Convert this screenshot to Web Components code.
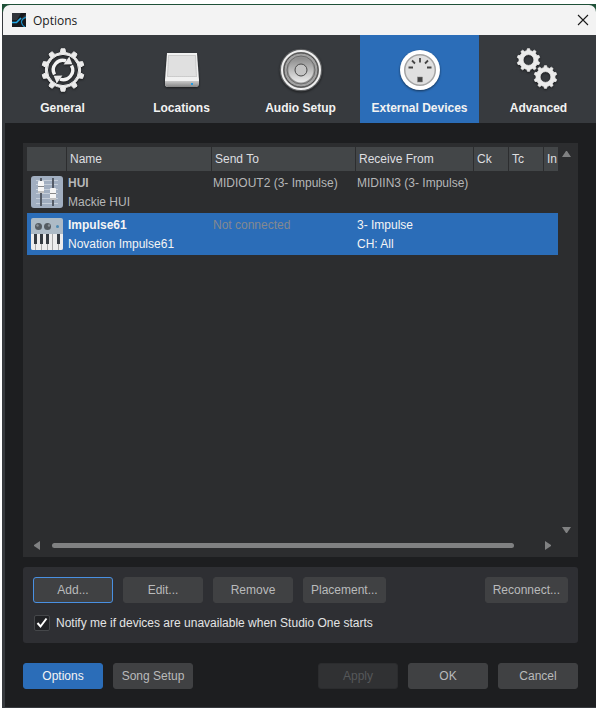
<!DOCTYPE html>
<html lang="en">
<head>
<meta charset="utf-8">
<title>Options</title>
<style>
html,body{margin:0;background:#fff}
body{font-family:"Liberation Sans",Arial,sans-serif;font-size:12px;overflow:hidden}
</style>
</head>
<body>
<options-window></options-window>
<script>
function define(name, html, setup) {
  customElements.define(name, class extends HTMLElement {
    connectedCallback() {
      if (this.shadowRoot) return;
      const t = document.createElement('template');
      t.innerHTML = html;
      this.attachShadow({mode: 'open'}).append(t.content.cloneNode(true));
      if (setup) setup(this, this.shadowRoot);
    }
  });
}

/* Toothed wheel outline centred on 0,0 */
function gearPath(teeth, outer, root, half, tip) {
  let d = '';
  for (let i = 0; i < teeth; i++) {
    const a = i * 2 * Math.PI / teeth - Math.PI / 2;
    [[root, -half], [outer, -tip], [outer, tip], [root, half]].forEach(([r, o], k) => {
      const p = (r * Math.cos(a + o)).toFixed(2) + ' ' + (r * Math.sin(a + o)).toFixed(2);
      d += !d ? 'M' + p : k ? 'L' + p : `A${root} ${root} 0 0 1 ${p}`;
    });
  }
  return d + 'Z';
}
const circle = r => `M${r} 0A${r} ${r} 0 1 0 ${-r} 0A${r} ${r} 0 1 0 ${r} 0Z`;
const cycleArrow = `<path d="M-8.500 4.500A9.600 9.600 0 0 1 3 -9.200" fill="none" stroke="#f4f4f4" stroke-width="3.400"/><path d="M6.300 -13.500L9.300 -5.800L.6 -5.400Z"/>`;

const icons = {
  general: `<svg viewBox="-24 -24 48 48" width="48" height="48" fill="#ebebeb">
    <path fill-rule="evenodd" stroke="#ebebeb" stroke-width="1" stroke-linejoin="round" d="${gearPath(10, 21.3, 17.6, .15, .09)}${circle(15.6)}"/>
    <g>${cycleArrow}</g><g transform="rotate(180)">${cycleArrow}</g></svg>`,
  locations: `<svg viewBox="0 0 48 48" width="48" height="48">
    <defs><linearGradient id="f" x2="0" y2="1"><stop stop-color="#c9c9c9"/><stop offset="1" stop-color="#858585"/></linearGradient></defs>
    <path d="M9 7H39L41 34Q41 41 38 41H10Q7 41 7 38V34Z" fill="#f1f1f1"/>
    <path d="M7 35H41V38Q41 41 38 41H10Q7 41 7 38Z" fill="url(#f)"/>
    <path d="M10.500 9.500H37.500L38.500 30.500H9.500Z" fill="#e0e0e0" stroke="#b0b0b0" stroke-dasharray="1 1"/>
    <rect x="33" y="37" width="2" height="2" fill="#219be4"/></svg>`,
  audio: `<svg viewBox="-24 -24 48 48" width="48" height="48">
    <defs><linearGradient id="s" x2="0" y2="1"><stop stop-color="#8a8a8a"/><stop offset="1" stop-color="#ececec"/></linearGradient></defs>
    <circle r="21.300" fill="#5c5e60"/><circle r="19" fill="#777" stroke="#efefef" stroke-width="2"/>
    <circle r="17" fill="#a2a2a2" stroke="#4a4a4a"/><circle r="14" fill="#959595" stroke="#6b6b6b"/>
    <circle r="12.500" fill="url(#s)"/><circle r="6" fill="#c4c4c4" stroke="#4a4a4a"/></svg>`,
  devices: `<svg viewBox="-24 -24 48 48" width="48" height="48">
    <circle r="20" fill="#fff"/><circle r="15.300" fill="#e0e0e0" stroke="#a4a4a4" stroke-width="1.500"/>
    <path d="M0-12V-7.500M-8-9.500L-5-6.500M8-9.500L5-6.500M-11.500-2.500H-7M11.500-2.500H7" stroke="#444" stroke-width="1.800"/>
    <rect x="-2.500" y="7" width="5" height="5" fill="#444" stroke="#888" stroke-width=".5"/></svg>`,
  advanced: `<svg viewBox="-24 -24 48 48" width="48" height="48" fill="#ebebeb">
    <g fill-rule="evenodd" stroke="#ebebeb" stroke-width=".8" stroke-linejoin="round">
    <path transform="translate(-10.500 -10)" d="${gearPath(10, 11.4, 9.5, .17, .1)}${circle(5.4)}"/>
    <path transform="translate(6.500 7)" d="${gearPath(10, 11.4, 9.5, .17, .1)}${circle(5.4)}"/></g></svg>`,
  mixer: `<svg viewBox="0 0 32 32" width="32" height="32">
    <rect width="32" height="32" rx="3" fill="#a1aec0"/>
    <path d="M5 4.500H27M5 8.500H27M5 13.500H27M5 17.500H27M5 22.500H27M5 27.500H27" stroke="#c5ced9"/>
    <path d="M10 2V30M22 2V30" stroke="#545b66" stroke-width="2"/>
    <rect x="7" y="5" width="6" height="12" rx="1" fill="#f5f5f5"/><path d="M7 10.500H13" stroke="#888"/><path d="M7 16H13" stroke="#c0c0c0" stroke-width="2"/>
    <rect x="19" y="12" width="6" height="12" rx="1" fill="#f5f5f5"/><path d="M19 17.500H25" stroke="#888"/><path d="M19 23H25" stroke="#c0c0c0" stroke-width="2"/></svg>`,
  keyboard: `<svg viewBox="0 0 32 32" width="32" height="32">
    <rect width="32" height="32" rx="2" fill="#adbbc6"/><path d="M0 16H32V30Q32 32 30 32H2Q0 32 0 30Z" fill="#ededed"/>
    <path d="M4.500 26V32M10.500 26V32M16.500 26V32M21.500 16V32M27.500 26V32" stroke="#a9a9a9"/>
    <path d="M3 16h3v10H3ZM9 16h3v10H9ZM15 16h3v10H15ZM26 16h3v10H26Z" fill="#353b41"/>
    <circle cx="7.500" cy="8.500" r="3.500" fill="#555c62"/><circle cx="16.500" cy="8.500" r="3.500" fill="#555c62"/>
    <circle cx="6.500" cy="7.500" r="1.200" fill="#8a9299"/><circle cx="18" cy="7.500" r="1.200" fill="#8a9299"/>
    <circle cx="26.500" cy="8.500" r="1.500" fill="#4f8bb3"/></svg>`,
  app: `<svg viewBox="0 0 14 14" width="14" height="14">
    <rect width="14" height="14" fill="#17191c"/><path d="M0 0H9L5 7H0Z" fill="#30343a"/><path d="M9 6L14 1V6Z" fill="#30343a"/>
    <path d="M0 9.500H4.500L9 5" fill="none" stroke="#22a9e6" stroke-width="1.600"/>
    <path d="M14 4Q9 6.500 9.500 9.500T13 14" fill="none" stroke="#1b8fc6" stroke-width="1.200"/></svg>`
};

define('ui-icon', `<style>:host{display:block;line-height:0}svg{display:block}:host([shadow]) svg{filter:drop-shadow(0 1px 1px #0008)}</style>`,
  (host, root) => root.append(document.createRange().createContextualFragment(icons[host.getAttribute('name')])));

define('title-bar', `<style>
:host{display:flex;align-items:center;height:30px;padding:0 7px 0 9px;background:#f3f3f3;color:#1a1a1a;border-radius:7px 7px 0 0;font-family:"Open Sans","Noto Sans",sans-serif}
h1{font-size:12px;font-weight:400;margin:0 auto 0 7px}
button{border:0;padding:0;background:none;width:12px;height:12px}svg{display:block}
</style><ui-icon name="app"></ui-icon><h1><slot></slot></h1>
<button aria-label="Close"><svg width="12" height="12" viewBox="0 0 12 12"><path d="M1 1L11 11M11 1L1 11" stroke="#1a1a1a" stroke-width="1.100"/></svg></button>`);

define('nav-tab', `<style>
:host{display:block;flex:1 0 0;min-width:0}
button{display:flex;flex-direction:column;align-items:center;gap:6px;width:100%;height:88px;padding:11px 0 0;border:0;background:none;color:#f2f2f2;font:bold 12px/16px "Liberation Sans",Arial,sans-serif;white-space:nowrap}
:host([active]) button{background:#2b6db8}
</style><button><ui-icon shadow></ui-icon><span><slot></slot></span></button>`, (host, root) => {
  const old = root.querySelector('ui-icon'), icon = document.createElement('ui-icon');
  icon.setAttribute('name', host.getAttribute('icon'));
  icon.setAttribute('shadow', '');
  old.replaceWith(icon);
});

define('ui-button', `<style>
:host{display:block}
button{display:block;height:26px;min-width:80px;padding:0 7px;border:1px solid #404143;border-radius:3px;background:#404143;color:#b9babb;font:12px/24px "Liberation Sans",Arial,sans-serif;white-space:nowrap}
:host([focused]) button{border-color:#4990e2}
:host([primary]) button{background:#2b6db8;border-color:#2b6db8;color:#f4f4f4}
:host([disabled]) button{background:#303133;border-color:#2b2c2e;color:#56585a}
</style><button><slot></slot></button>`, (host, root) => {
  root.querySelector('button').disabled = host.hasAttribute('disabled');
});

define('device-table', `<style>
:host{display:block;min-width:0;overflow:hidden}
table{width:100%;table-layout:fixed;border-collapse:separate;border-spacing:0;color:#b6b7b8;font-size:12px}
th{height:24px;padding:0 0 0 3px;background:#434648;color:#dedfe0;font-weight:400;text-align:left;border-right:1px solid #2c2d2f;box-sizing:border-box;white-space:nowrap;overflow:hidden}
th:last-child{border:0}
td{height:42px;padding:3px 0 1px 1px;box-sizing:border-box;line-height:19px;vertical-align:top;white-space:nowrap}
td:first-child{padding:5px 0 0 4px}
p{margin:0}
.sel td{background:#2b6db8;color:#f4f4f4}
.sel td.off{color:#85898f}
.c1{width:40px}.c2{width:145px}.c3{width:144px}.c5{width:35px}.c6{width:14px}
</style><table>
<colgroup><col class="c1"><col class="c2"><col class="c3"><col><col class="c5"><col class="c5"><col class="c6"></colgroup>
<thead><tr><th></th><th>Name</th><th>Send To</th><th>Receive From</th><th>Ck</th><th>Tc</th><th>In</th></tr></thead>
<tbody>
<tr><td><ui-icon name="mixer"></ui-icon></td><td><p><b>HUI</b></p><p>Mackie HUI</p></td><td>MIDIOUT2 (3- Impulse)</td><td>MIDIIN3 (3- Impulse)</td><td></td><td></td><td></td></tr>
<tr class="sel"><td><ui-icon name="keyboard"></ui-icon></td><td><p><b>Impulse61</b></p><p>Novation Impulse61</p></td><td class="off">Not connected</td><td><p>3- Impulse</p><p>CH: All</p></td><td></td><td></td><td></td></tr>
</tbody></table>`);

define('scroll-panel', `<style>
:host{display:grid;grid-template:1fr 24px/1fr 20px;flex:1;background:#2c2d2f;padding:4px 0 0 4px;box-sizing:border-box}
.v{display:flex;flex-direction:column;justify-content:space-between;padding:4px 0 0 4px}
.h{display:flex;align-items:center;gap:12px;padding:0 7px;height:24px}
.track{flex:1}.thumb{width:96%;height:5px;border-radius:3px;background:#808182}
button{display:block;border:0;padding:0;background:none;line-height:0}svg{display:block;fill:#808182}
</style><slot></slot>
<div class="v"><button aria-label="Scroll up"><svg width="9" height="6"><path d="M0 6L4 0H5L9 6Z"/></svg></button><button aria-label="Scroll down"><svg width="9" height="6"><path d="M0 0L4 6H5L9 0Z"/></svg></button></div>
<div class="h"><button aria-label="Scroll left"><svg width="6" height="9"><path d="M6 0L0 4V5L6 9Z"/></svg></button><div class="track"><div class="thumb"></div></div><button aria-label="Scroll right"><svg width="6" height="9"><path d="M0 0L6 4V5L0 9Z"/></svg></button></div>`);

define('check-option', `<style>
:host{display:block}
label{display:flex;align-items:center;gap:6px;height:18px;color:#e3e4e5}
input{appearance:none;margin:0;width:16px;height:16px;border:1px solid #45474a;border-radius:2px;background:#202124;flex:none}
.box{display:grid;flex:none}.box>*{grid-area:1/1}svg{pointer-events:none}
input:not(:checked)+svg{visibility:hidden}
</style><label><span class="box"><input type="checkbox" checked><svg width="16" height="16" viewBox="0 0 16 16"><path d="M3.500 8L6.500 11.500L12.500 3.500" fill="none" stroke="#fff" stroke-width="2"/></svg></span><slot></slot></label>`);

define('options-window', `<style>
:host{display:flex;flex-direction:column;box-sizing:border-box;min-height:100vh;padding:4px 0 0 2px;overflow:hidden;background:#fff}
.frame{flex:1;display:flex;flex-direction:column;background:linear-gradient(#1f5138,#1f5138) 0 0/100% 8px no-repeat,#373a3e;padding:1px 0 1px 1px}
nav{display:flex;background:#373a3e;margin-right:-2px}
main{flex:1;display:flex;flex-direction:column;margin-left:2px;padding:20px 18px 18px;background:#1d1e20}
.actions{margin-top:10px;padding:10px;background:#2e2f33;border-radius:3px}
.row{display:flex;gap:10px}.push{margin-left:auto}
check-option{margin:11px 0 1px 1px}
footer{margin-top:20px}
</style>
<div class="frame">
<title-bar>Options</title-bar>
<nav><nav-tab icon="general">General</nav-tab><nav-tab icon="locations">Locations</nav-tab><nav-tab icon="audio">Audio Setup</nav-tab><nav-tab icon="devices" active>External Devices</nav-tab><nav-tab icon="advanced">Advanced</nav-tab></nav>
<main>
<scroll-panel><device-table></device-table></scroll-panel>
<section class="actions">
<div class="row"><ui-button focused>Add...</ui-button><ui-button>Edit...</ui-button><ui-button>Remove</ui-button><ui-button>Placement...</ui-button><ui-button class="push">Reconnect...</ui-button></div>
<check-option>Notify me if devices are unavailable when Studio One starts</check-option>
</section>
<footer class="row"><ui-button primary>Options</ui-button><ui-button>Song Setup</ui-button><ui-button class="push" disabled>Apply</ui-button><ui-button>OK</ui-button><ui-button>Cancel</ui-button></footer>
</main>
</div>`);
</script>
</body>
</html>
